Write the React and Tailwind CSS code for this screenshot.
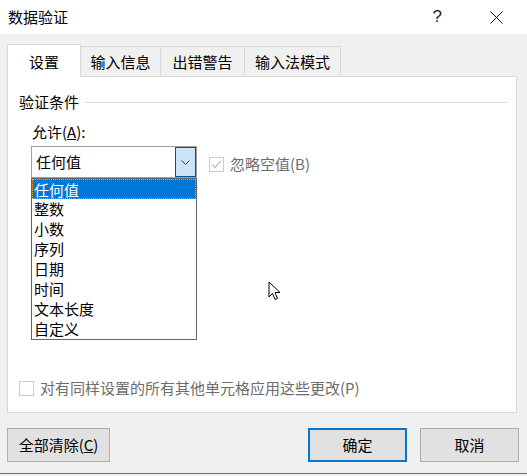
import React from 'react';

const font = { fontFamily: '"Noto Sans CJK SC", "Noto Sans", sans-serif' };

const options = ['任何值', '整数', '小数', '序列', '日期', '时间', '文本长度', '自定义'];

const Tab = ({ label, width, active }) =>
  active ? (
    <div
      className="relative z-10 -mb-px flex h-[33px] items-center justify-center border border-b-0 border-[#d9d9d9] bg-white pt-[2px]"
      style={{ width }}
    >
      {label}
    </div>
  ) : (
    <div
      className="flex h-[30px] items-center justify-center border-t border-r border-[#d9d9d9] bg-[#f0f0f0] pt-[1px]"
      style={{ width }}
    >
      {label}
    </div>
  );

const Checkbox = ({ checked }) => (
  <div className="flex h-[15px] w-[15px] shrink-0 items-center justify-center border border-[#cccccc] bg-white">
    {checked && (
      <svg width="11" height="9" viewBox="0 0 11 9">
        <path d="M1 4.5 L4 7.5 L10 1" fill="none" stroke="#c4c4c4" strokeWidth="1.4" />
      </svg>
    )}
  </div>
);

const Button = ({ children, primary, className = '' }) => (
  <button
    className={`flex h-[34px] items-center justify-center bg-[#e1e1e1] text-[15px] leading-[20px] text-black ${
      primary ? 'border-2 border-[#0078d7]' : 'border border-[#adadad]'
    } ${className}`}
  >
    {children}
  </button>
);

export default function App() {
  return (
    <div className="relative h-[476px] w-[527px] overflow-hidden bg-[#f0f0f0] text-[15px] leading-[20px] text-black" style={font}>
      {/* title bar */}
      <div className="flex h-[34px] items-center bg-white pl-[8px]">
        <span className="text-[15px]">数据验证</span>
        <span className="ml-auto mr-[48px] text-[17px] text-[#222]" style={{ fontFamily: '"Liberation Sans", sans-serif' }}>?</span>
        <svg width="13" height="13" viewBox="0 0 13 13" className="mr-[24px]">
          <path d="M0.5 0.5 L12.5 12.5 M12.5 0.5 L0.5 12.5" stroke="#111" strokeWidth="1" />
        </svg>
      </div>

      <div className="pl-[7px] pr-[10px] pt-[10px]">
        {/* tabs */}
        <div className="flex h-[32px] items-end">
          <Tab label="设置" width={74} active />
          <Tab label="输入信息" width={80} />
          <Tab label="出错警告" width={84} />
          <Tab label="输入法模式" width={96} />
        </div>

        {/* panel */}
        <div className="relative h-[337px] border border-[#d9d9d9] bg-white pl-[11px] pt-[15px]">
          <div className="flex h-[20px] items-center">
            <span>验证条件</span>
            <div className="ml-[6px] mr-[8px] h-px flex-1 bg-[#dcdcdc]" />
          </div>

          <div className="ml-[13px] mt-[10px] h-[20px]">
            允许(<span className="underline">A</span>):
          </div>

          <div className="ml-[12px] mt-[4px] flex">
            <div className="flex h-[32px] w-[166px] items-center border border-[#a0a0a0] bg-white">
              <span className="ml-[4px] flex-1">任何值</span>
              <div className="flex h-[30px] w-[21px] items-center justify-center border border-[#005499] bg-[#cce4f7]">
                <svg width="9" height="5" viewBox="0 0 9 5">
                  <path d="M0.5 0.5 L4.5 4.5 L8.5 0.5" fill="none" stroke="#404040" strokeWidth="1" />
                </svg>
              </div>
            </div>
            <div className="ml-[12px] mt-[4px] flex items-center">
              <Checkbox checked />
              <span className="ml-[6px] text-[#6d6d6d]">忽略空值(B)</span>
            </div>
          </div>

          <div className="mt-[200px] flex items-center">
            <Checkbox />
            <span className="ml-[6px] text-[#6d6d6d]">对有同样设置的所有其他单元格应用这些更改(P)</span>
          </div>

          {/* open dropdown list */}
          <div className="absolute left-[23px] top-[101px] w-[166px] border border-[#646464] bg-white">
            {options.map((o, i) => (
              <div
                key={o}
                className={`h-[20px] pl-[2px] leading-[19px] ${
                  i === 0 ? 'border border-dotted border-[#f0a040] bg-[#0078d7] pl-px text-white' : ''
                }`}
              >
                {o}
              </div>
            ))}
          </div>
        </div>
      </div>

      {/* buttons */}
      <div className="mt-[15px] flex pl-[7px] pr-[8px]">
        <Button className="w-[103px]">
          全部清除(<span className="underline">C</span>)
        </Button>
        <Button primary className="ml-auto w-[99px]">确定</Button>
        <Button className="ml-[13px] w-[99px]">取消</Button>
      </div>

      <div className="absolute left-0 top-[473px] h-px w-full bg-[#6e6e6e]" />

      {/* mouse pointer */}
      <svg className="absolute left-[268px] top-[281px]" width="14" height="22" viewBox="0 0 14 22">
        <path
          d="M1 1 L1 16 L4.5 12.5 L7 18.5 L9.5 17.5 L7 11.5 L12 11.5 Z"
          fill="white"
          stroke="black"
          strokeWidth="1"
          strokeLinejoin="miter"
        />
      </svg>
    </div>
  );
}
